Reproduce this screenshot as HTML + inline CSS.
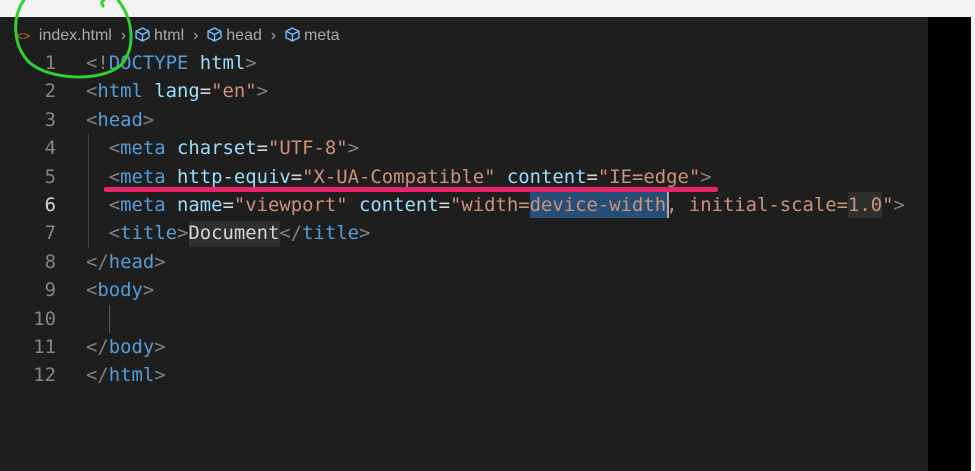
<!DOCTYPE html>
<html><head><meta charset="utf-8"><style>
html,body{margin:0;padding:0;width:975px;height:471px;overflow:hidden;background:#f3f3f3;}
#ed{position:absolute;left:0;top:17px;width:928px;height:454px;background:#1e1e1e;}
#blk{position:absolute;left:928px;top:17px;width:43px;height:454px;background:#000;}
#crumb{position:absolute;left:16px;top:27px;font:16px "Liberation Sans",sans-serif;color:#a9a9a9;white-space:nowrap;}
#crumb svg{margin-right:4px}
.code{position:absolute;left:0;top:49px;font:18.9px/28.4px "DejaVu Sans Mono",monospace;white-space:pre;color:#d4d4d4;}
.ln{position:absolute;left:0;width:56px;text-align:right;color:#858585;}
.tx{position:absolute;left:86px;}
.p{color:#808080}.t{color:#569cd6}.a{color:#9cdcfe}.s{color:#ce9178}
</style></head><body>
<div id="ed"></div><div id="blk"></div>
<div id="crumb"><span style="color:#e37933;font-size:12px">&lt;&gt;</span> &nbsp;index.html &nbsp;›&nbsp;
<svg width="15" height="15" viewBox="0 0 14 14" style="vertical-align:-2px"><path d="M7 1L13 4V10L7 13L1 10V4Z M1 4L7 7L13 4 M7 7V13" fill="none" stroke="#75beff" stroke-width="1.3"/></svg>html &nbsp;›&nbsp;
<svg width="15" height="15" viewBox="0 0 14 14" style="vertical-align:-2px"><path d="M7 1L13 4V10L7 13L1 10V4Z M1 4L7 7L13 4 M7 7V13" fill="none" stroke="#75beff" stroke-width="1.3"/></svg>head &nbsp;›&nbsp;
<svg width="15" height="15" viewBox="0 0 14 14" style="vertical-align:-2px"><path d="M7 1L13 4V10L7 13L1 10V4Z M1 4L7 7L13 4 M7 7V13" fill="none" stroke="#75beff" stroke-width="1.3"/></svg>meta</div>
<div style="position:absolute;left:530px;top:192px;width:137px;height:26px;background:#264f78"></div>
<div style="position:absolute;left:667px;top:192px;width:2px;height:26px;background:#aeafad"></div>
<div style="position:absolute;left:848px;top:192px;width:34px;height:26px;background:#2f2f2f"></div>
<div style="position:absolute;left:189px;top:221px;width:91px;height:26px;background:#2f2f2f"></div>
<div style="position:absolute;left:88px;top:134px;width:1px;height:114px;background:#404040"></div>
<div style="position:absolute;left:109px;top:305px;width:1px;height:28px;background:#5a5a5a"></div>
<div class="code">
<div class="ln" style="top:0">1</div><div class="tx" style="top:0"><span class="p">&lt;!</span><span class="t">DOCTYPE</span> <span class="a">html</span><span class="p">&gt;</span></div>
<div class="ln" style="top:28.4px">2</div><div class="tx" style="top:28.4px"><span class="p">&lt;</span><span class="t">html</span> <span class="a">lang</span>=<span class="s">"en"</span><span class="p">&gt;</span></div>
<div class="ln" style="top:56.8px">3</div><div class="tx" style="top:56.8px"><span class="p">&lt;</span><span class="t">head</span><span class="p">&gt;</span></div>
<div class="ln" style="top:85.2px">4</div><div class="tx" style="top:85.2px">  <span class="p">&lt;</span><span class="t">meta</span> <span class="a">charset</span>=<span class="s">"UTF-8"</span><span class="p">&gt;</span></div>
<div class="ln" style="top:113.6px">5</div><div class="tx" style="top:113.6px">  <span class="p">&lt;</span><span class="t">meta</span> <span class="a">http-equiv</span>=<span class="s">"X-UA-Compatible"</span> <span class="a">content</span>=<span class="s">"IE=edge"</span><span class="p">&gt;</span></div>
<div class="ln" style="top:142px;color:#d4d4d4">6</div><div class="tx" style="top:142px">  <span class="p">&lt;</span><span class="t">meta</span> <span class="a">name</span>=<span class="s">"viewport"</span> <span class="a">content</span>=<span class="s">"width=device-width, initial-scale=1.0"</span><span class="p">&gt;</span></div>
<div class="ln" style="top:170.4px">7</div><div class="tx" style="top:170.4px">  <span class="p">&lt;</span><span class="t">title</span><span class="p">&gt;</span>Document<span class="p">&lt;/</span><span class="t">title</span><span class="p">&gt;</span></div>
<div class="ln" style="top:198.8px">8</div><div class="tx" style="top:198.8px"><span class="p">&lt;/</span><span class="t">head</span><span class="p">&gt;</span></div>
<div class="ln" style="top:227.2px">9</div><div class="tx" style="top:227.2px"><span class="p">&lt;</span><span class="t">body</span><span class="p">&gt;</span></div>
<div class="ln" style="top:255.6px">10</div>
<div class="ln" style="top:284px">11</div><div class="tx" style="top:284px"><span class="p">&lt;/</span><span class="t">body</span><span class="p">&gt;</span></div>
<div class="ln" style="top:312.4px">12</div><div class="tx" style="top:312.4px"><span class="p">&lt;/</span><span class="t">html</span><span class="p">&gt;</span></div>
</div>
<div style="position:absolute;left:104px;top:187px;width:614px;height:5px;background:#e8236a;border-radius:2px"></div>
<svg style="position:absolute;left:0;top:0" width="150" height="90"><path d="M24 0C12 16 12 46 30 63C50 80 100 82 120 66C136 50 134 20 118 0" fill="none" stroke="#2ed12e" stroke-width="3" stroke-linecap="round"/><path d="M103 6C101 3 102 1 104 0" fill="none" stroke="#2ed12e" stroke-width="3" stroke-linecap="round"/></svg>
</body></html>
